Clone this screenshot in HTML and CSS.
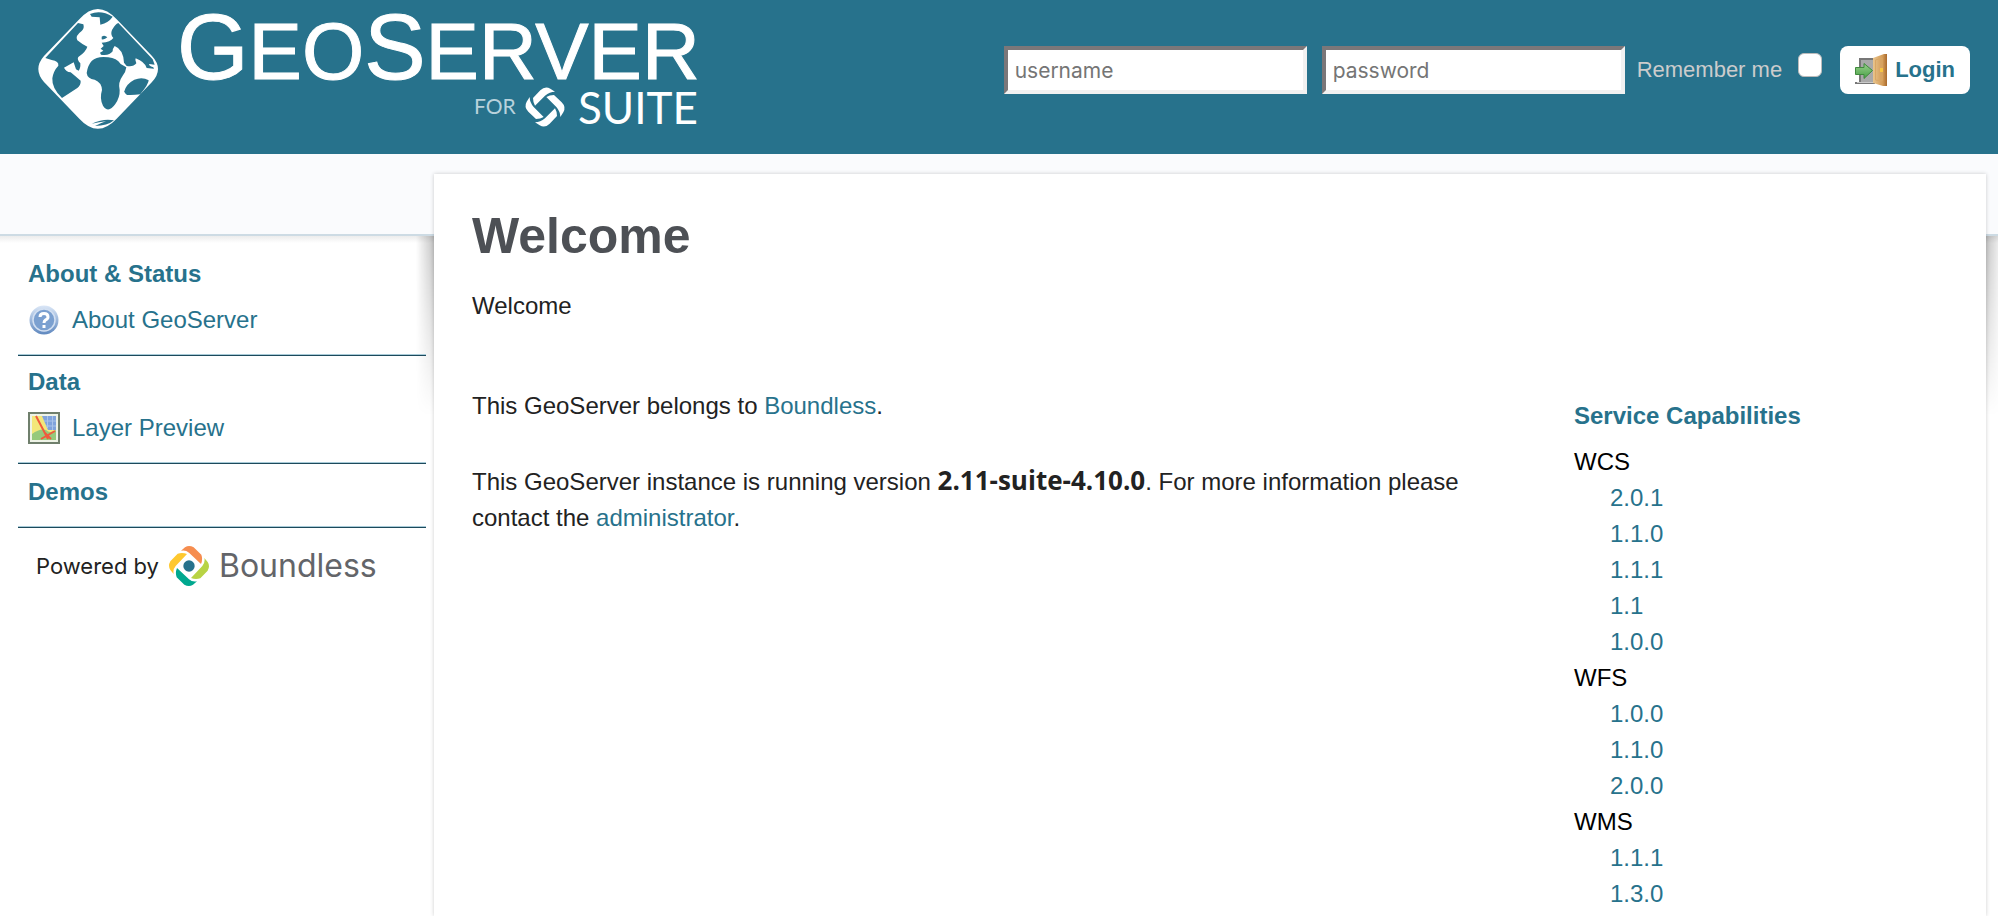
FILE: index.html
```html
<!DOCTYPE html>
<html lang="en">
<head>
<meta charset="utf-8">
<title>GeoServer: Welcome</title>
<link rel="stylesheet" href="styles.css">
</head>
<body>
<header class="header">
  <a class="brand" href="#" aria-label="GeoServer for Suite">
    <svg class="brand-logo" viewBox="0 0 720 130" width="720" height="130">
      <g transform="scale(.33333)">
        <path fill="#fff" d="M132 168 238 58Q293-4 350 58L456 168Q492 207 456 246L350 356Q293 416 238 356L132 246Q98 207 132 168Z"/>
        <g class="brand-sea">
          <path d="M270 42Q302 28 338 50Q326 68 301 74L299 52L275 50Z"/>
          <path d="M234 69L250 73Q254 85 245 93Q224 108 232 121Q245 132 262 140Q258 155 235 171Q230 178 241 190Q242 205 236 212L228 208L221 187L192 203Q198 215 212 217Q225 228 242 242Q243 255 232 264L186 294Q155 265 157 235Q160 213 175 197Q177 183 155 180L136 174Z"/>
          <path d="M355 69L458 178L464 194L448 192Q444 196 460 202L462 206L440 204Q435 186 407 175Q404 180 409 190Q400 202 380 198L372 188Q370 148 344 138Q338 145 338 154Q328 168 303 164L300 158L310 152L302 146L311 138L305 128Q332 126 340 114Q330 104 336 90Q346 72 355 69Z"/>
          <path d="M305 110Q314 104 322 112Q314 120 305 118Z"/>
          <path d="M275 183Q292 167 325 172Q350 174 362 192L379 202Q377 216 369 226Q353 248 359 270Q360 292 346 312Q325 342 309 317Q298 296 306 270Q305 247 284 239Q262 236 260 219Q263 196 275 183Z"/>
          <path d="M373 274Q378 252 403 239Q427 229 446 241Q446 252 421 283Q400 286 381 285Q373 282 373 274Z"/>
          <path d="M275 371Q312 354 342 361Q322 378 285 378Q300 370 318 364Q298 366 275 371Z"/>
        </g>
      </g>
      <text class="brand-name" x="177" y="79"><tspan class="brand-cap">G</tspan>EO<tspan class="brand-cap">S</tspan>ERVER</text>
      <text class="brand-for" x="474" y="114">FOR</text>
      <g fill="#fff" transform="translate(545 107) scale(.33333)">
        <path id="blade" d="M-36-27-14-50Q0-64 16-55L30-46Q14-46 0-34L-30-4Q-36-14-36-27Z"/>
        <use href="#blade" transform="rotate(90)"/>
        <use href="#blade" transform="rotate(180)"/>
        <use href="#blade" transform="rotate(270)"/>
      </g>
      <text class="brand-suite" x="578" y="124">SUITE</text>
    </svg>
  </a>
  <form class="login">
    <input class="login-field" type="text" placeholder="username" aria-label="username">
    <input class="login-field" type="password" placeholder="password" aria-label="password">
    <label class="remember" for="remember">Remember me</label>
    <input class="remember-box" type="checkbox" id="remember">
    <button class="login-button" type="button">
      <svg viewBox="0 0 32 32" width="32" height="32" aria-hidden="true">
        <defs>
          <linearGradient id="wood"><stop offset="0" stop-color="#e9c48c"/><stop offset=".7" stop-color="#d29a56"/><stop offset="1" stop-color="#a8692c"/></linearGradient>
          <linearGradient id="leaf" x2="0" y2="1"><stop offset="0" stop-color="#9ad08c"/><stop offset="1" stop-color="#48a046"/></linearGradient>
        </defs>
        <path fill="#777" d="M4 4h16v26H0v-2h4z"/>
        <path fill="#a9a9a9" d="M6 6h12v22H6z"/>
        <path fill="#c9c9c9" d="M2 28h16v1H2z"/>
        <path fill="url(#wood)" d="M18 4 29 0h3v32h-4l-10-3z"/>
        <path fill="none" stroke="#d9a765" d="M20.500 6 27 4v23l-6.500-1z"/>
        <path fill="#f6c543" d="M25 14h3v4h-3z"/>
        <path fill="url(#leaf)" stroke="#3f8a3c" d="M.5 13.500H9V9.500l8.500 7-8.500 8v-4H.5z"/>
      </svg>
      <span>Login</span>
    </button>
  </form>
</header>

<div class="page">
  <nav class="sidebar">
    <section class="menu">
      <h2 class="menu-title">About &amp; Status</h2>
      <a class="menu-link" href="#">
        <svg viewBox="0 0 32 32" width="32" height="32" aria-hidden="true">
          <defs><linearGradient id="ball" x2="0" y2="1"><stop offset="0" stop-color="#dbe7f7"/><stop offset="1" stop-color="#5f88bf"/></linearGradient></defs>
          <circle cx="16" cy="16" r="14.500" fill="url(#ball)"/>
          <circle cx="16" cy="16" r="11" fill="#7ba0d0" stroke="#d3e0f2" stroke-width="1.500"/>
          <path fill="none" stroke="#fff" stroke-width="3" d="M12 13Q12 9.500 16 9.500T20 13Q20 15 17.500 16Q16 17 16 19"/>
          <path fill="#fff" d="M14.500 21h3v3h-3z"/>
        </svg>
        <span>About GeoServer</span>
      </a>
    </section>
    <section class="menu">
      <h2 class="menu-title">Data</h2>
      <a class="menu-link" href="#">
        <svg viewBox="0 0 32 32" width="32" height="32" aria-hidden="true">
          <path fill="#6f7f6c" d="M0 0h32v32H0z"/>
          <path fill="#eef3e6" d="M2 2h28v28H2z"/>
          <path fill="#f3e779" d="M4 4h24v24H4z"/>
          <path fill="#7fa3dc" d="M14 4h14v14h-8z"/>
          <path fill="none" stroke="#a9c3ea" d="M16 9h12M18 14h10M19.500 4v12M24.500 4v14"/>
          <path fill="#96c97b" d="M4 22Q12 16 18 18Q22 22 28 18V28H4Z"/>
          <path fill="none" stroke="#ef5a3c" stroke-width="2" d="M8 4 20 27M13 27 27 19M17 21l6 6"/>
        </svg>
        <span>Layer Preview</span>
      </a>
    </section>
    <section class="menu menu-short">
      <h2 class="menu-title">Demos</h2>
    </section>
    <a class="powered" href="#">
      <span class="powered-by">Powered by</span>
      <svg viewBox="-60 -60 120 120" width="40" height="40" aria-hidden="true">
        <defs><path id="arm" d="M-24-46-12-56Q0-64 14-56L37-34Q42-20 36-6L0-40Q-10-49-24-46Z"/></defs>
        <use href="#arm" fill="#b8d344" transform="rotate(90)"/>
        <use href="#arm" fill="#00a88f" transform="rotate(180)"/>
        <use href="#arm" fill="#fec82f" transform="rotate(270)"/>
        <use href="#arm" fill="#f68d4f"/>
        <circle r="17" fill="#27728c"/>
      </svg>
      <span class="powered-name">Boundless</span>
    </a>
  </nav>

  <main class="panel">
    <h1 class="title">Welcome</h1>
    <p class="lead">Welcome</p>
    <div class="columns">
      <div class="about">
        <p>This GeoServer belongs to <a href="#">Boundless</a>.</p>
        <p>This GeoServer instance is running version <strong class="version">2.11-suite-4.10.0</strong>. For more information please contact the <a href="#">administrator</a>.</p>
      </div>
      <aside class="services">
        <h2 class="services-title">Service Capabilities</h2>
        <ul class="service-list">
          <li>WCS
            <ul class="version-list">
              <li><a href="#">2.0.1</a></li>
              <li><a href="#">1.1.0</a></li>
              <li><a href="#">1.1.1</a></li>
              <li><a href="#">1.1</a></li>
              <li><a href="#">1.0.0</a></li>
            </ul>
          </li>
          <li>WFS
            <ul class="version-list">
              <li><a href="#">1.0.0</a></li>
              <li><a href="#">1.1.0</a></li>
              <li><a href="#">2.0.0</a></li>
            </ul>
          </li>
          <li>WMS
            <ul class="version-list">
              <li><a href="#">1.1.1</a></li>
              <li><a href="#">1.3.0</a></li>
            </ul>
          </li>
        </ul>
      </aside>
    </div>
  </main>
</div>
</body>
</html>
```
FILE: styles.css
```css
* {
  box-sizing: border-box;
}

body {
  margin: 0;
  min-height: 100vh;
  display: flex;
  flex-direction: column;
  background: #fff;
  color: #222;
  font: 24px/36px "Liberation Sans", Arial, sans-serif;
}

h1, h2, p, ul {
  margin: 0;
  padding: 0;
}

ul {
  list-style: none;
}

a {
  color: #27728c;
  text-decoration: none;
}

svg {
  display: block;
  flex: none;
}

/* Header */
.header {
  display: flex;
  justify-content: space-between;
  align-items: flex-start;
  min-height: 154px;
  padding-right: 28px;
  background: #27728c;
}

.brand-logo {
  overflow: visible;
}

.brand-sea {
  fill: #27728c;
}

.brand-name {
  fill: #fff;
  stroke: #fff;
  stroke-width: 1px;
  font: 80px "Liberation Sans", Arial, sans-serif;
}

.brand-cap {
  font-size: 92px;
}

.brand-for {
  fill: #b9d2dc;
  font: 400 21px Lato, sans-serif;
}

.brand-suite {
  fill: #fff;
  font: 400 44px Lato, sans-serif;
}

.login {
  display: flex;
  align-items: center;
  padding-top: 46px;
}

.login-field {
  width: 303px;
  height: 48px;
  margin-right: 15px;
  padding: 0 7px;
  border: 4px solid;
  border-color: #7b7779 #f1f1f1 #f1f1f1 #7b7779;
  border-radius: 0;
  background: #fff;
  font: 21px Inter, sans-serif;
}

.login-field::placeholder {
  color: #757575;
}

.remember {
  color: #ccc;
  font-size: 22px;
}

.login-field + .remember {
  margin-left: -3px;
}

.remember-box {
  appearance: none;
  width: 24px;
  height: 24px;
  margin: 0 18px 10px 16px;
  border: 1px solid #bbb;
  border-radius: 6px;
  background: #fff;
}

.login-button {
  display: flex;
  align-items: center;
  gap: 8px;
  height: 48px;
  padding: 0 15px;
  border: 0;
  border-radius: 8px;
  background: #fff;
  color: #27728c;
  font: bold 22px "Liberation Sans", Arial, sans-serif;
}

/* Page frame */
.page {
  flex: 1;
  display: grid;
  grid-template-columns: 434px 1fr;
  padding-right: 12px;
  position: relative;
  z-index: 0;
  overflow: hidden;
  background: linear-gradient(#fafbfd 80px, #cddbe4 80px, #cddbe4 82px, #ececec 82px, #fff 89px);
}

/* Sidebar */
.sidebar {
  padding: 94px 8px 0 18px;
}

.menu {
  padding: 8px 10px 17px;
  border-bottom: 1px solid #1d4a5c;
  box-shadow: inset 0 -1px #a8cbd8;
}

.menu-short {
  padding-top: 10px;
}

.menu-title {
  color: #27728c;
  font-size: 24px;
}

.menu-link {
  display: flex;
  align-items: center;
  gap: 12px;
  padding-top: 10px;
}

.powered {
  display: flex;
  align-items: center;
  gap: 10px;
  padding: 18px 18px 0;
}

.powered-by {
  color: #222;
  font: 22px Inter, sans-serif;
}

.powered-name {
  color: #636569;
  font: 32px/40px Inter, sans-serif;
}

/* Content panel */
.panel {
  position: relative;
  margin-top: 20px;
  padding: 32px 38px 0;
  background: #fff;
  box-shadow: 0 0 4px rgba(0, 0, 0, .2);
}

/* Side shadows that fade out down the panel */
.panel::before,
.panel::after {
  content: "";
  position: absolute;
  z-index: -1;
  top: 62px;
  width: 18px;
  height: 180px;
  mask-image: linear-gradient(#000, transparent);
}

.panel::before {
  right: 100%;
  background: linear-gradient(to left, rgba(0, 0, 0, .24), transparent);
}

.panel::after {
  left: 100%;
  background: linear-gradient(to right, rgba(0, 0, 0, .24), transparent);
}

.title {
  color: #4d5055;
  font-size: 50px;
  line-height: 60px;
}

.lead {
  padding-top: 22px;
}

.columns {
  display: grid;
  grid-template-columns: 1fr 374px;
  gap: 64px;
  padding-top: 64px;
}

.about {
  display: flex;
  flex-direction: column;
  gap: 40px;
}

.version {
  font-family: "Open Sans", sans-serif;
  font-size: 26px;
  line-height: 1;
}

.services {
  padding-top: 10px;
  color: #000;
}

.services-title {
  padding-bottom: 10px;
  color: #27728c;
  font-size: 24px;
}

.version-list {
  padding-left: 36px;
}
```
